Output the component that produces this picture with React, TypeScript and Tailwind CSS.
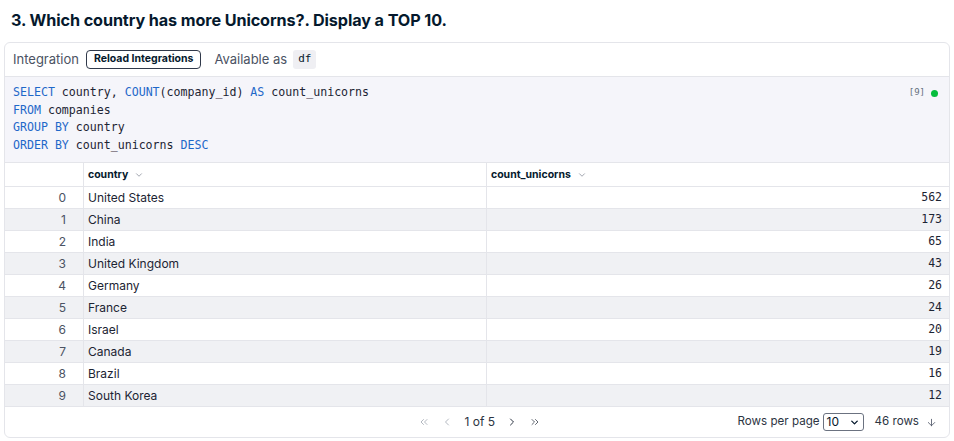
import { ChevronDown, ChevronLeft, ChevronRight, ChevronsLeft, ChevronsRight, ArrowDown } from "lucide-react";

const rows: [string, number][] = [
  ["United States", 562],
  ["China", 173],
  ["India", 65],
  ["United Kingdom", 43],
  ["Germany", 26],
  ["France", 24],
  ["Israel", 20],
  ["Canada", 19],
  ["Brazil", 16],
  ["South Korea", 12],
];

const mono = "font-['DejaVu_Sans_Mono',monospace]";

export default function App() {
  return (
    <div className="w-[954px] h-[441px] bg-white text-[#1c2433] font-['Inter',sans-serif] overflow-hidden">
      {/* Title */}
      <h2 className="h-[42px] px-[11px] pt-[8px] text-[16.2px] font-bold tracking-[-0.1px] text-[#05192d]">
        3. Which country has more Unicorns?. Display a TOP 10.
      </h2>

      {/* Cell */}
      <div className="mx-[4px] border border-[#e4e5ea] rounded-[6px] overflow-hidden">
        {/* Toolbar */}
        <div className="h-[33px] flex items-center px-[8px] text-[13px] text-[#4b5363]">
          <span>Integration</span>
          <button className="ml-[7px] h-[19px] px-[7px] border border-[#30394a] rounded-[4px] text-[10.5px] font-bold text-[#05192d] leading-none">
            Reload Integrations
          </button>
          <span className="ml-[13px]">Available as</span>
          <span className={`ml-[6px] bg-[#efeff3] rounded-[3px] px-[5px] py-[1px] text-[11px] text-[#05192d] ${mono}`}>
            df
          </span>
        </div>

        {/* SQL */}
        <div className={`h-[86px] border-t border-[#e4e5ea] bg-[#f5f5fa] px-[8px] pt-[7px] flex justify-between ${mono} text-[11.6px] leading-[17.7px] text-[#1c2433]`}>
          <div>
            <div>
              <span className="text-[#1f68c9]">SELECT</span> country, <span className="text-[#1f68c9]">COUNT</span>(company_id){" "}
              <span className="text-[#1f68c9]">AS</span> count_unicorns
            </div>
            <div>
              <span className="text-[#1f68c9]">FROM</span> companies
            </div>
            <div>
              <span className="text-[#1f68c9]">GROUP BY</span> country
            </div>
            <div>
              <span className="text-[#1f68c9]">ORDER BY</span> count_unicorns <span className="text-[#1f68c9]">DESC</span>
            </div>
          </div>
          <div className="flex items-center gap-[6px] h-[18px] pr-[3px] text-[9px] text-[#65707f]">
            <span>[9]</span>
            <span className="w-[7px] h-[7px] rounded-full bg-[#06bd3d]" />
          </div>
        </div>

        {/* Table */}
        <div className="border-t border-[#e4e5ea]">
          <div className="h-[24px] flex border-b border-[#e4e5ea] text-[10.5px] font-bold text-[#05192d]">
            <div className="w-[79px] border-r border-[#e4e5ea]" />
            <div className="w-[403px] border-r border-[#e4e5ea] flex items-center px-[4px] gap-[6px]">
              country <ChevronDown className="w-[10px] h-[10px] text-[#6b7280]" strokeWidth={1.5} />
            </div>
            <div className="flex-1 flex items-center px-[4px] gap-[6px]">
              count_unicorns <ChevronDown className="w-[10px] h-[10px] text-[#6b7280]" strokeWidth={1.5} />
            </div>
          </div>
          {rows.map(([country, n], i) => (
            <div
              key={country}
              className={`h-[22px] flex border-b border-[#e4e5ea] text-[12px] ${i % 2 === 1 ? "bg-[#f0f1f4]" : "bg-white"}`}
            >
              <div className="w-[79px] border-r border-[#e4e5ea] flex items-center justify-end pr-[17px] text-[12px] text-[#4b5363]">
                {i}
              </div>
              <div className="w-[403px] border-r border-[#e4e5ea] flex items-center px-[4px]">{country}</div>
              <div className={`flex-1 flex items-center justify-end pr-[7px] text-[11.5px] ${mono}`}>{n}</div>
            </div>
          ))}
        </div>

        {/* Footer */}
        <div className="h-[30px] flex items-center text-[11.6px] text-[#2c3442]">
          <div className="flex-1 flex items-center justify-end gap-[11px] text-[#9aa0ab]">
            <ChevronsLeft className="w-[12px] h-[12px]" strokeWidth={1.5} />
            <ChevronLeft className="w-[12px] h-[12px]" strokeWidth={1.5} />
            <span className="text-[#2c3442] text-[12px]">1 of 5</span>
            <ChevronRight className="w-[12px] h-[12px] text-[#2c3442]" strokeWidth={2} />
            <ChevronsRight className="w-[12px] h-[12px] text-[#2c3442]" strokeWidth={1.5} />
          </div>
          <div className="w-[408px] flex items-center justify-end gap-[3px] pr-[12px]">
            <span>Rows per page</span>
            <span className="flex items-center justify-between w-[41px] h-[18px] border border-[#6b7280] rounded-[3px] px-[3px] text-[12px] text-[#05192d]">
              10 <ChevronDown className="w-[11px] h-[11px]" strokeWidth={3} />
            </span>
            <span className="ml-[8px]">46 rows</span>
            <ArrowDown className="ml-[4px] w-[11px] h-[11px] text-[#4b5363]" strokeWidth={1.8} />
          </div>
        </div>
      </div>
    </div>
  );
}
